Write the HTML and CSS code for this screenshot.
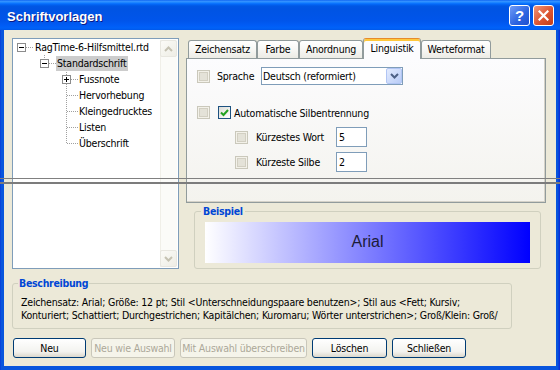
FILE: index.html
```html
<!DOCTYPE html>
<html>
<head>
<meta charset="utf-8">
<title>Schriftvorlagen</title>
<link rel="stylesheet" href="styles.css">
</head>
<body>
<div class="window">
  <div class="titlebar">
    <span class="title">Schriftvorlagen</span>
    <div class="tbtns">
      <span class="tbtn help">?</span>
      <span class="tbtn close"><svg width="11" height="11" viewBox="0 0 11 11"><path d="M1.5 1.5l8 8M9.5 1.5l-8 8" stroke="#fff" stroke-width="2.2" stroke-linecap="square"/></svg></span>
    </div>
  </div>
  <div class="client">
    <div class="top">
      <div class="tree">
        <div class="tree-items">
          <svg class="tree-lines" width="147" height="120" viewBox="0 0 147 120" shape-rendering="crispEdges">
            <g stroke="#A0A0A0" stroke-dasharray="1 1" fill="none">
              <path d="M13 8.5h8"/>
              <path d="M31.5 16v4"/>
              <path d="M36 24.5h7"/>
              <path d="M53.5 31v74"/>
              <path d="M58 40.5h7"/>
              <path d="M54 56.5h11M54 72.5h11M54 88.5h11M54 104.5h11"/>
            </g>
            <g fill="#fff" stroke="#8C8C8C">
              <rect x="4.5" y="4.5" width="8" height="8"/>
              <rect x="27.5" y="20.5" width="8" height="8"/>
              <rect x="49.5" y="36.5" width="8" height="8"/>
            </g>
            <g stroke="#000" fill="none">
              <path d="M6 8.5h5"/>
              <path d="M29 24.5h5"/>
              <path d="M51 40.5h5M53.5 38v5"/>
            </g>
          </svg>
          <div class="node l0">RagTime-6-Hilfsmittel.rtd</div>
          <div class="node l1"><span class="sel">Standardschrift</span></div>
          <div class="node l2">Fussnote</div>
          <div class="node l2">Hervorhebung</div>
          <div class="node l2">Kleingedrucktes</div>
          <div class="node l2">Listen</div>
          <div class="node l2">Überschrift</div>
        </div>
        <div class="vscroll">
          <span class="sbtn"><svg width="9" height="6" viewBox="0 0 9 6"><path d="M1 5l3.5-3.5L8 5" stroke="#C5C2B2" stroke-width="2" fill="none"/></svg></span>
          <span class="sbtn"><svg width="9" height="6" viewBox="0 0 9 6"><path d="M1 1l3.5 3.5L8 1" stroke="#C5C2B2" stroke-width="2" fill="none"/></svg></span>
        </div>
      </div>
      <div class="right">
        <div class="tabs">
          <span class="tab w1">Zeichensatz</span>
          <span class="tab w2">Farbe</span>
          <span class="tab w3">Anordnung</span>
          <span class="tab active w4">Linguistik</span>
          <span class="tab w5">Werteformat</span>
        </div>
        <div class="panel">
          <div class="row r1">
            <span class="cb3"></span>
            <span class="lbl-sprache">Sprache</span>
            <div class="combo">
              <span class="combo-text">Deutsch (reformiert)</span>
              <span class="combo-btn"><svg width="9" height="6" viewBox="0 0 9 6"><path d="M1 1l3.5 3.5L8 1" stroke="#4D6185" stroke-width="2" fill="none"/></svg></span>
            </div>
          </div>
          <div class="row r2">
            <span class="cb3"></span>
            <span class="cb checked"><svg width="9" height="8" viewBox="0 0 9 8"><path d="M1 3.5l2.5 2.5L8 1" stroke="#21A121" stroke-width="2" fill="none"/></svg></span>
            <span class="lbl-auto">Automatische Silbentrennung</span>
          </div>
          <div class="row r3">
            <span class="cb3"></span>
            <span class="lbl-num">Kürzestes Wort</span>
            <span class="field">5</span>
          </div>
          <div class="row r4">
            <span class="cb3"></span>
            <span class="lbl-num">Kürzeste Silbe</span>
            <span class="field">2</span>
          </div>
        </div>
        <fieldset class="group example">
          <legend>Beispiel</legend>
          <div class="sample">Arial</div>
        </fieldset>
      </div>
    </div>
    <fieldset class="group desc">
      <legend>Beschreibung</legend>
      <p>Zeichensatz: Arial; Größe: 12 pt; Stil &lt;Unterschneidungspaare benutzen&gt;; Stil aus &lt;Fett; Kursiv;<br>Konturiert; Schattiert; Durchgestrichen; Kapitälchen; Kuromaru; Wörter unterstrichen&gt;; Groß/Klein: Groß/</p>
    </fieldset>
    <div class="buttons">
      <span class="btn b1">Neu</span>
      <span class="btn b2 disabled">Neu wie Auswahl</span>
      <span class="btn b3 disabled">Mit Auswahl überschreiben</span>
      <span class="btn b4">Löschen</span>
      <span class="btn b5">Schließen</span>
    </div>
  </div>
  <div class="tear"></div>
</div>
</body>
</html>
```

FILE: styles.css
```css
* { box-sizing: border-box; }
html, body { margin: 0; padding: 0; }
body {
  width: 560px;
  height: 370px;
  overflow: hidden;
  font-family: "DejaVu Sans Condensed", "Liberation Sans", sans-serif;
  font-size: 10.5px;
  letter-spacing: -0.2px;
  color: #000;
  background: #fff;
}
.window {
  position: relative;
  width: 560px;
  height: 370px;
  display: flex;
  flex-direction: column;
  background: linear-gradient(to right, #0831D9 0, #0855DD 1px, #0855DD 558px, #0831D9 559px);
}
.titlebar {
  height: 30px;
  flex: none;
  display: flex;
  align-items: center;
  justify-content: space-between;
  padding: 0 6px 0 7px;
  background: linear-gradient(to bottom, #0058EE 0px, #3A93FF 1px, #288EFF 2px, #127DFF 3px, #0369FC 4px, #0262EE 5px, #0057E5 6px, #0054E3 9px, #0055EB 21px, #005BF5 25px, #0062F8 28px, #0058EA 30px);
}
.title {
  font-family: "Liberation Sans", sans-serif;
  font-weight: bold;
  font-size: 13px;
  letter-spacing: 0;
  color: #fff;
  text-shadow: 1px 1px 0 #0A1883;
  padding-top: 2px;
}
.tbtns { display: flex; gap: 3px; }
.tbtn {
  width: 21px;
  height: 21px;
  border: 1px solid #fff;
  border-radius: 3px;
  display: flex;
  align-items: center;
  justify-content: center;
}
.help {
  background: linear-gradient(135deg, #6F9BF7 0%, #2C63E0 60%, #1F50CF 100%);
  color: #fff;
  font: bold 15px "Liberation Sans", sans-serif;
  letter-spacing: 0;
}
.close {
  background: linear-gradient(135deg, #F0957A 0%, #DD5531 55%, #C23D18 100%);
}
.client {
  flex: 1;
  margin: 0 4px 4px;
  background: #ECE9D8;
  padding: 8px 0 0 8px;
}
.top { display: flex; gap: 7px; height: 231px; }

/* tree */
.tree {
  width: 167px;
  height: 231px;
  border: 1px solid #7F9DB9;
  background: #fff;
  display: flex;
}
.tree-items { flex: 1; position: relative; }
.tree-lines { position: absolute; left: 0; top: 0; pointer-events: none; }
.node { height: 16px; line-height: 16px; white-space: nowrap; position: relative; }
.l0 { padding-left: 22px; }
.l1 { padding-left: 43px; }
.l2 { padding-left: 66px; }
.sel { display: inline-block; background: #CCCCCC; padding: 0 2px 0 1px; line-height: 15px; }
.vscroll {
  width: 17px;
  margin: 1px 1px 1px 0;
  display: flex;
  flex-direction: column;
  justify-content: space-between;
  background: #FBFBF8;
  box-shadow: inset 1px 0 0 #F0EFE8;
}
.sbtn {
  width: 17px;
  height: 17px;
  border: 1px solid #E8E7E0;
  border-radius: 2px;
  background: linear-gradient(135deg, #FBFBF7, #EEEDE5);
  display: flex;
  align-items: center;
  justify-content: center;
}

/* right column */
.right { width: 360px; display: flex; flex-direction: column; }
.tabs { height: 20px; display: flex; align-items: flex-end; padding-left: 2px; }
.tab {
  height: 18px;
  border: 1px solid #919B9C;
  border-bottom: none;
  border-radius: 3px 3px 0 0;
  background: linear-gradient(#FFFFFF, #F7F7F4 50%, #ECEBE5);
  text-align: center;
  line-height: 17px;
  white-space: nowrap;
}
.tab.active {
  height: 21px;
  margin-bottom: -1px;
  position: relative;
  z-index: 1;
  background: #FCFCFE;
  border-top: 1px solid #E68B2C;
  box-shadow: inset 0 2px 0 #FFC83C;
  line-height: 18px;
}
.w1 { width: 69px; }
.w2 { width: 42px; }
.w3 { width: 64px; }
.w4 { width: 58px; }
.w5 { width: 70px; }
.panel {
  height: 145px;
  border: 1px solid #919B9C;
  box-shadow: inset -1px -1px 0 #D5D2C8;
  background: linear-gradient(#FCFCFE, #F4F3EE);
  padding: 8px 0 0 10px;
}
.row { display: flex; align-items: center; }
.r1 { height: 18px; }
.r2 { height: 13px; margin-top: 21px; }
.r3 { height: 20px; margin-top: 8px; padding-left: 38px; }
.r4 { height: 20px; margin-top: 5px; padding-left: 38px; }
.cb3 {
  width: 13px;
  height: 13px;
  flex: none;
  border: 1px solid #CAC8BB;
  background: #F3F1E9;
  display: flex;
  align-items: center;
  justify-content: center;
}
.cb3::after {
  content: "";
  width: 7px;
  height: 7px;
  border: 1px solid #D2CFC2;
  background: #E4E2D8;
}
.cb {
  width: 13px;
  height: 13px;
  flex: none;
  border: 1px solid #1C5180;
  background: linear-gradient(135deg, #DCDCD7, #FFFFFF);
  display: flex;
  align-items: center;
  justify-content: center;
  margin-left: 8px;
}
.lbl-sprache { margin-left: 7px; width: 44px; }
.lbl-auto { margin-left: 3px; }
.lbl-num { margin-left: 8px; width: 80px; }
.combo {
  width: 142px;
  height: 18px;
  border: 1px solid #7F9DB9;
  background: #fff;
  display: flex;
  align-items: center;
}
.combo-text { flex: 1; padding-left: 1px; }
.combo-btn {
  width: 16px;
  height: 16px;
  border: 1px solid #B1C5F4;
  border-radius: 2px;
  background: linear-gradient(135deg, #E3EBFE, #B9CCF7);
  display: flex;
  align-items: center;
  justify-content: center;
}
.field {
  width: 31px;
  height: 20px;
  border: 1px solid #7F9DB9;
  background: #fff;
  padding-left: 2px;
  line-height: 18px;
}

/* group boxes */
.group {
  margin: 0;
  border: 1px solid #D0D0BF;
  border-radius: 3px;
  min-width: 0;
}
.group legend {
  color: #0046D5;
  font-weight: bold;
  line-height: 13px;
  padding: 0 2px;
  letter-spacing: -0.3px;
}
.example {
  margin: 2px 0 0 8px;
  width: 347px;
  height: 64px;
  padding: 4px 10px 0 10px;
}
.example legend { margin-left: -4px; }
.sample {
  height: 41px;
  background: linear-gradient(to right, #FFFFFF, #0000FF);
  color: #1C1C38;
  font: 16px "Liberation Sans", Arial, sans-serif;
  letter-spacing: 0;
  line-height: 40px;
  text-align: center;
}
.desc {
  margin-top: 8px;
  width: 500px;
  height: 52px;
  padding: 6px 8px 0 8px;
}
.desc legend { margin-left: -3px; padding: 0 1px; }
.desc p { margin: 0; line-height: 13px; white-space: nowrap; }

/* buttons */
.buttons { display: flex; gap: 5px; margin-top: 9px; padding-left: 1px; }
.btn {
  height: 20px;
  border: 1px solid #003C74;
  border-radius: 3px;
  background: linear-gradient(#FFFFFF, #F3F3EF 70%, #DCD8CC);
  text-align: center;
  line-height: 18px;
  white-space: nowrap;
}
.btn.disabled {
  border-color: #C9C7BA;
  color: #ACA899;
  background: #F5F4EA;
}
.b1 { width: 73px; }
.b2 { width: 84px; }
.b3 { width: 127px; }
.b4 { width: 75px; }
.b5 { width: 74px; }

/* screenshot tear line */
.tear {
  position: absolute;
  left: 0;
  top: 178px;
  width: 560px;
  height: 6px;
  border-top: 1px solid #808080;
  border-bottom: 2px solid #7C7C7C;
  pointer-events: none;
}
```
